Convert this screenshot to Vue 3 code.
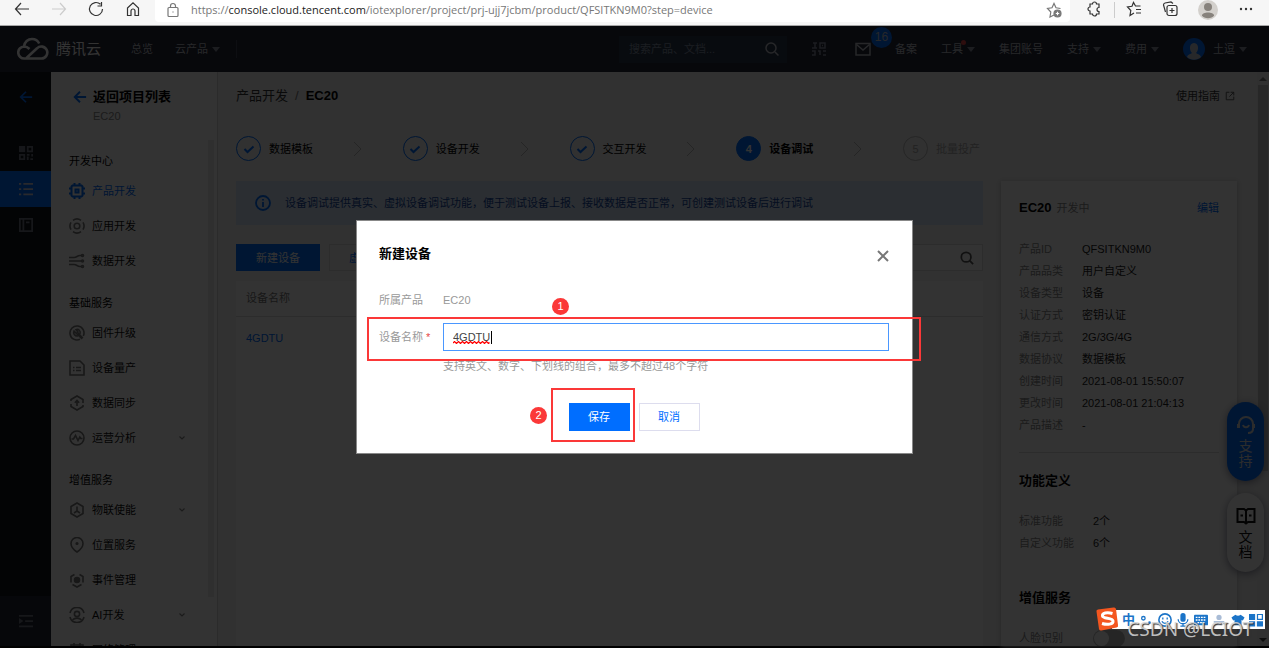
<script setup>
import { ref } from 'vue'

const deviceName = ref('4GDTU')

const groups = [
  {
    title: '开发中心',
    items: [
      { label: '产品开发', icon: 'chip', active: true },
      { label: '应用开发', icon: 'target' },
      { label: '数据开发', icon: 'flow' },
    ],
  },
  {
    title: '基础服务',
    items: [
      { label: '固件升级', icon: 'wrench' },
      { label: '设备量产', icon: 'list' },
      { label: '数据同步', icon: 'sync' },
      { label: '运营分析', icon: 'pulse', more: true },
    ],
  },
  {
    title: '增值服务',
    items: [
      { label: '物联使能', icon: 'hex', more: true },
      { label: '位置服务', icon: 'pin' },
      { label: '事件管理', icon: 'event' },
      { label: 'AI开发', icon: 'ai', more: true },
      { label: '网络管理', icon: 'net' },
    ],
  },
]

const icons = {
  chip: '<path d="M3.500 2.500h9l1 1v9l-1 1h-9l-1-1v-9z"/><path d="M6.500 6.500h3v3h-3z"/><path d="M5.500 0v2.500M10.500 0v2.500M5.500 13.500V16M10.500 13.500V16M0 5.500h2.500M0 10.500h2.500M13.500 5.500H16M13.500 10.500H16"/>',
  target: '<circle cx="8" cy="8" r="2.8"/><path d="M4 2.300a7 7 0 0 1 8 0M14 4.400a7 7 0 0 1 0 7.200M12 13.700a7 7 0 0 1-8 0M2 11.600a7 7 0 0 1 0-7.200"/>',
  flow: '<path d="M0 4.500h5c3 0 3-2 6-2h2M0 8h13M0 11.500h5c3 0 3 2 6 2h2"/><circle cx="13.500" cy="2.500" r="1"/><circle cx="13.500" cy="8" r="1"/><circle cx="13.500" cy="13.500" r="1"/>',
  wrench: '<path d="M14.300 11a7 7 0 1 0-3.300 3.300"/><path stroke-width="2.600" d="M8.500 8.500l5 5"/><path d="M5 6l2.500 2.500 1.500-1.500L7 4.700a3 3 0 0 1 4 3.800L8.500 11A3.500 3.500 0 0 1 5 6z"/>',
  list: '<path d="M1 1h10l4 4v10H1z"/><path d="M4 7.500h1.500M7 7.500h5M4 10.500h1.500M7 10.500h5"/>',
  sync: '<path d="M2 6V4.500L8 1l6 3.500V8M14 10v1.500L8 15l-6-3.500V9M8 11V6M5.800 7.800L8 5.500l2.200 2.300"/>',
  pulse: '<circle cx="8" cy="8" r="7"/><path d="M2.500 9h2L6.500 5.500 9 10.500l1.800-3.500 1 1.500h1.700"/>',
  hex: '<path d="M8 1l6 3.500v7L8 15l-6-3.500v-7z"/><path d="M8 4.500V9l-3 2M8 9l3 2"/>',
  pin: '<path d="M8 15S2 11 2 6.500a6 6 0 0 1 12 0C14 11 8 15 8 15z"/><circle cx="8" cy="6.500" r=".8"/>',
  event: '<path d="M5.500 2.500L2 4.500v6M10.500 2.500l3.500 2v6M3.500 12.500L8 15l4.500-2.500"/><circle cx="8" cy="8" r="2.500" fill="currentColor"/>',
  ai: '<path d="M1 6a7.200 7.200 0 0 1 14 0M1 10a7.200 7.200 0 0 0 14 0"/><circle cx="8" cy="7" r="2.600"/><path d="M3.500 12.800c2.500-2.300 6.500-2.300 9 0"/>',
  net: '<rect x="2" y="3" width="12" height="11"/><path d="M5 1v4M11 1v4M5 9h6"/>',
}

const steps = [
  { label: '数据模板', state: 'done' },
  { label: '设备开发', state: 'done' },
  { label: '交互开发', state: 'done' },
  { label: '设备调试', state: 'current' },
  { label: '批量投产', state: 'todo' },
]

const facts = [
  ['产品ID', 'QFSITKN9M0'],
  ['产品品类', '用户自定义'],
  ['设备类型', '设备'],
  ['认证方式', '密钥认证'],
  ['通信方式', '2G/3G/4G'],
  ['数据协议', '数据模板'],
  ['创建时间', '2021-08-01 15:50:07'],
  ['更改时间', '2021-08-01 21:04:13'],
  ['产品描述', '-'],
]
</script>

<template>
  <div class="window">
    <header class="browser">
      <div class="nav-buttons">
        <button aria-label="后退"><svg viewBox="0 0 16 16"><path d="M15 8H1.500M7 2L1.500 8 7 14" /></svg></button>
        <button aria-label="前进" class="off"><svg viewBox="0 0 16 16"><path d="M1 8h13.500M9 2l5.500 6L9 14" /></svg></button>
        <button aria-label="刷新"><svg viewBox="0 0 16 16"><path d="M14.500 8a6.500 6.500 0 1 1-2-4.700M13.500 1v4h-4" /></svg></button>
        <button aria-label="主页"><svg viewBox="0 0 16 16"><path d="M2.500 7L8 1.800 13.500 7v7.500H10V10a2 2 0 0 0-4 0v4.500H2.500z" /></svg></button>
      </div>
      <div class="address">
        <svg viewBox="0 0 16 16"><rect x="3" y="5.500" width="10" height="9" rx="1" /><path d="M5.500 5.500V4a2.500 2.500 0 0 1 5 0v1.500M8 9.500v1" /></svg>
        <span class="url">https://<b>console.cloud.tencent.com</b>/iotexplorer/project/prj-ujj7jcbm/product/QFSITKN9M0?step=device</span>
        <button aria-label="收藏"><svg viewBox="0 0 16 16"><path d="M8 13l-4 2 .8-5L1.500 6.500l4.500-.7L8 1.500l2 4.300 4.500.7" /><circle cx="11.500" cy="11.500" r="3.500" fill="currentColor" /><path stroke="#fff" d="M11.500 9.800v3.400M9.800 11.500h3.400" /></svg></button>
      </div>
      <div class="browser-tools">
        <button aria-label="扩展"><svg viewBox="0 0 16 16"><path d="M4 3h2.500a2 2 0 0 1 4 0H13v3.500a2 2 0 0 0 0 4V13h-2.500a2 2 0 0 1-4 0H4v-3a2 2 0 0 1 0-4z" /></svg></button>
        <i class="rule"></i>
        <button aria-label="收藏夹"><svg viewBox="0 0 16 16"><path d="M8 12l-4 2.500.8-5L1.500 6l4.500-.7L7.500 1.500 9.500 5h5M10 8.500h5M10 12h5" /></svg></button>
        <button aria-label="集锦"><svg viewBox="0 0 16 16"><rect x="5" y="4.500" width="10" height="10" rx="2" /><path d="M3.500 11L1.500 4a2 2 0 0 1 1.500-2l6-1 2 1.500M10 7v5M7.500 9.500h5" /></svg></button>
        <button aria-label="个人资料" class="person"><svg viewBox="0 0 20 20"><circle cx="10" cy="10" r="10" fill="#d3d0cc" stroke="none" /><circle cx="10" cy="7" r="4" fill="#87827c" stroke="none" /><path d="M4 15.500c0-4 12-4 12 0-2 3.500-10 3.500-12 0z" fill="#87827c" stroke="none" /></svg></button>
        <button aria-label="更多"><svg viewBox="0 0 16 16"><g fill="currentColor" stroke="none"><circle cx="3" cy="8" r="1.200" /><circle cx="8" cy="8" r="1.200" /><circle cx="13" cy="8" r="1.200" /></g></svg></button>
      </div>
    </header>

    <div class="page">
      <header class="topbar">
        <a href="#" class="brand">
          <svg viewBox="0 0 32 24"><path d="M9 21.500H7.500a6 6 0 0 1-.5-12C7.500 5 11 2 15 2c3.500 0 6 2 7.200 4.500M8 21.500h16.500a6 6 0 1 0-4.500-10.200L9.500 21M7 9.500c2.500 0 4 1 5.500 2.500" /></svg>
          <span>腾讯云</span>
        </a>
        <a href="#">总览</a>
        <a href="#" class="drop">云产品</a>
        <i class="rule"></i>
        <div class="top-right">
          <label class="top-search">
            <input type="text" aria-label="搜索" placeholder="搜索产品、文档..." />
            <svg viewBox="0 0 16 16"><circle cx="7" cy="7" r="5" /><path d="M11 11l3.500 3.500" /></svg>
          </label>
          <svg class="glyph" viewBox="0 0 16 16"><path d="M2 2h4M4 2v5M1 7h5M9 2h5v5H9zM1 10h3v4H1M7 10h2v4M12 10h3M12 14h3M11 4.500h1" /></svg>
          <a href="#" class="mail" aria-label="消息">
            <svg viewBox="0 0 16 16"><rect x="1" y="2.500" width="14" height="11.500" /><path d="M1.500 3.500L8 9l6.500-5.500" /></svg>
            <span class="count">16</span>
          </a>
          <a href="#">备案</a>
          <a href="#" class="drop hot">工具</a>
          <a href="#">集团账号</a>
          <a href="#" class="drop">支持</a>
          <a href="#" class="drop">费用</a>
          <a href="#" class="drop account">
            <svg viewBox="0 0 22 22"><circle cx="11" cy="11" r="11" fill="#006eff" /><path d="M4 19c1-3 4-3 5-4-3-3-3-10 2-10s5 7 2 10c1 1 4 1 5 4-4 3.500-10 3.500-14 0z" fill="#c4c8d0" /></svg>土逗</a>
        </div>
      </header>

      <div class="body">
        <nav class="rail" aria-label="主导航">
          <a href="#" class="back" aria-label="返回"><svg viewBox="0 0 16 16"><path d="M15 8H2M8 2L2 8l6 6" /></svg></a>
          <a href="#" aria-label="概览"><svg viewBox="0 0 16 16"><path d="M0 0h7v7H0z" fill="currentColor" stroke="none" /><path d="M10 1h5v5h-5zM1 10h5v5H1zM9 10h3M15 9v3M10 12v4M13 15h3" /></svg></a>
          <a href="#" class="active" aria-label="产品"><svg viewBox="0 0 16 16"><path d="M0 2h2.500M5 2h11M0 8h2.500M5 8h11M0 14h2.500M5 14h11" /></svg></a>
          <a href="#" aria-label="文档"><svg viewBox="0 0 16 16"><path d="M1 1h14v14H1zM5 2v12M8 5h4" /></svg></a>
          <button class="fold" aria-label="收起"><svg viewBox="0 0 16 16"><path d="M0 2h16M7 8h9M0 14h16" /><path fill="currentColor" stroke="none" d="M0 4.500l5 3.500-5 3.500z" /></svg></button>
        </nav>

        <aside class="side">
          <div class="side-head">
            <a href="#"><svg viewBox="0 0 16 16"><path d="M15 8H2M8 2L2 8l6 6" /></svg>返回项目列表</a>
            <small>EC20</small>
          </div>
          <div class="menu">
            <section v-for="g in groups" :key="g.title">
              <h3>{{ g.title }}</h3>
              <a v-for="i in g.items" :key="i.label" href="#" :class="{ active: i.active }">
                <svg viewBox="0 0 16 16" v-html="icons[i.icon]"></svg>
                <span>{{ i.label }}</span>
                <svg v-if="i.more" class="more" viewBox="0 0 8 8"><path d="M1.500 2.500L4 5l2.500-2.500" /></svg>
              </a>
            </section>
            <i class="thumb"></i>
          </div>
        </aside>

        <main>
          <div class="crumbs">
            <a href="#">产品开发</a><span>/</span><strong>EC20</strong>
            <a href="#" class="guide">使用指南<svg viewBox="0 0 16 16"><path d="M7 2H2v12h12V9M9 2h5v5M14 2L7 9" /></svg></a>
          </div>
          <div class="columns">
            <div class="work">
              <ol class="steps">
                <li v-for="(s, n) in steps" :key="s.label" :class="s.state">
                  <i class="dot"><svg v-if="s.state === 'done'" viewBox="0 0 12 12"><path d="M1.500 6l3 3 6-5.500" /></svg><template v-else>{{ n + 1 }}</template></i>
                  <span>{{ s.label }}</span>
                  <svg v-if="n < 4" class="next" viewBox="0 0 10 16"><path d="M1 1l7 7-7 7" /></svg>
                </li>
              </ol>
              <p class="notice">
                <svg viewBox="0 0 16 16"><circle cx="8" cy="8" r="7" /><path d="M8 7v5M8 4v1.500" /></svg>
                设备调试提供真实、虚拟设备调试功能，便于测试设备上报、接收数据是否正常，可创建测试设备后进行调试
              </p>
              <div class="actions">
                <button class="primary">新建设备</button>
                <button class="plain">虚拟</button>
                <label class="find"><input type="text" aria-label="搜索设备" /><svg viewBox="0 0 16 16"><circle cx="7" cy="7" r="5.500" /><path d="M11 11l4 4" /></svg></label>
              </div>
              <table>
                <thead><tr><th>设备名称</th></tr></thead>
                <tbody><tr><td><a href="#">4GDTU</a></td></tr></tbody>
              </table>
            </div>
            <aside class="card">
              <div class="card-head"><strong>EC20</strong><span>开发中</span><a href="#">编辑</a></div>
              <dl>
                <template v-for="f in facts" :key="f[0]"><dt>{{ f[0] }}</dt><dd>{{ f[1] }}</dd></template>
              </dl>
              <hr />
              <h2>功能定义</h2>
              <dl class="wide"><dt>标准功能</dt><dd>2个</dd><dt>自定义功能</dt><dd>6个</dd></dl>
              <h2 class="later">增值服务</h2>
              <label class="toggle"><span>人脸识别</span><input type="checkbox" /></label>
            </aside>
          </div>
        </main>
        <div class="scrollbar"><i class="up"></i><i class="bar"></i><i class="down"></i></div>
      </div>

      <div class="floats">
        <button class="support"><svg viewBox="0 0 20 20"><path d="M3 13V9a7 7 0 0 1 14 0v5c0 3-2 4-5 4M2 9v4M18 9v4M7 10c1 3 5 3 6 0" /></svg>支<br />持</button>
        <button><svg viewBox="0 0 20 20"><path d="M1.500 3H8l2 1.500L12 3h6.500v13H12l-2 1.500L8 16H1.500zM10 4.500v13M4.500 9.500H7M13 9.500h2.500" /></svg>文<br />档</button>
      </div>

      <div class="mask">
        <form class="dialog" role="dialog" aria-labelledby="dialog-title" @submit.prevent>
          <div class="dialog-head">
            <h1 id="dialog-title">新建设备</h1>
            <button type="button" aria-label="关闭"><svg viewBox="0 0 12 12"><path d="M1 1l10 10M11 1L1 11" /></svg></button>
          </div>
          <div class="field"><span class="name">所属产品</span><span class="value">EC20</span></div>
          <div class="field entry">
            <label class="name" for="device">设备名称<em>*</em></label>
            <div class="box">
              <input id="device" v-model="deviceName" type="text" spellcheck="false" />
              <svg class="squiggle" viewBox="0 0 38 3"><path d="M0 2l1.500-1.500 2 2 2-2 2 2 2-2 2 2 2-2 2 2 2-2 2 2 2-2 2 2 2-2 2 2 2-2 2 2 2-2 2 2 1-1" /></svg>
              <i class="caret"></i>
            </div>
          </div>
          <p class="hint">支持英文、数字、下划线的组合，最多不超过48个字符</p>
          <div class="dialog-foot">
            <button class="save" type="submit">保存</button>
            <button class="cancel" type="button">取消</button>
          </div>
          <i class="frame first"></i>
          <i class="frame second"></i>
          <b class="mark one">1</b>
          <b class="mark two">2</b>
        </form>
      </div>
    </div>

    <div class="ime">
      <svg class="sogou" viewBox="0 0 24 24"><path d="M1.500 4.500Q1 3 3 2.500L18.500.5q2-.5 2.500 1.500L23 18q.5 2-1.500 2.500l-15 3q-2 .5-2.500-1.500z" fill="#f4561f" /><path d="M17.500 6.500C12 5 7 6 7.500 9s10 1.500 10.500 5-6 4-11 2.500" fill="none" stroke="#fff" stroke-width="3" /></svg>
      <span>中</span>
      <svg viewBox="0 0 16 16"><circle cx="5" cy="6" r="2" fill="none" stroke="currentColor" stroke-width="1.500" /><circle cx="12" cy="11" r="1.500" /></svg>
      <svg viewBox="0 0 16 16"><circle cx="8" cy="8" r="7" fill="none" stroke="currentColor" stroke-width="1.800" /><path d="M5.500 5v2.500M10.500 5v2.500M4.500 9.500c1.500 3 5.500 3 7 0" fill="none" stroke="currentColor" stroke-width="1.500" /></svg>
      <svg viewBox="0 0 16 16"><rect x="5" y="0" width="6" height="10" rx="3" /><path d="M2.500 7c0 7 11 7 11 0M8 12v3M5 15h6" fill="none" stroke="currentColor" stroke-width="1.500" /></svg>
      <svg viewBox="0 0 16 16"><rect x="0" y="2" width="16" height="12" rx="1" /><path d="M2 5h12M2 8h12M4 11h8" stroke="#fff" stroke-dasharray="2 1" /></svg>
      <svg class="pale" viewBox="0 0 16 16"><circle cx="8" cy="5" r="3" /><path d="M2 9h12v2H2zM4 12h8v2H4z" /></svg>
      <svg viewBox="0 0 16 16"><path d="M5 2q3 2 6 0l4.500 3-2 3.500-1.500-.5v6H4V8l-1.500.5-2-3.500z" /></svg>
      <svg viewBox="0 0 16 16"><path d="M0 1h7v7H0zM0 9.500h7v6H0zM9 9.500h7v6H9z" /><path d="M9.700 1.700h5.600v5.600H9.700z" fill="none" stroke="currentColor" stroke-width="1.400" /></svg>
    </div>
    <div class="watermark">CSDN @LCIOT</div>
  </div>
</template>

<style>
html, body { margin: 0; background: #000; }
</style>

<style scoped>
.window {
  position: relative;
  display: flex;
  flex-direction: column;
  height: 100vh;
  overflow: hidden;
  font: 11px/22px "Liberation Sans", "Noto Sans CJK SC", sans-serif;
  color: #000;
}
* { box-sizing: border-box; }
a { color: inherit; text-decoration: none; }
button, input { font: inherit; color: inherit; margin: 0; }
button { padding: 0; border: 0; background: none; }
i, em { font-style: normal; }
h1, h2, h3, p, dl, dd, ol { margin: 0; padding: 0; }
svg { display: block; flex: none; width: 16px; height: 16px; fill: none; stroke: currentColor; stroke-width: 1.5; }

.browser { flex: none; display: flex; height: 26px; background: #f6f6f6; border-bottom: 1px solid #a6a6a6; color: #333; }
.browser svg { stroke-width: 1.2; }
.browser button { display: grid; place-items: center; height: 18px; }
.nav-buttons { display: flex; width: 155px; padding: 0 14px; gap: 21px; }
.nav-buttons .off { color: #ccc; }
.address { flex: 1; display: flex; align-items: center; gap: 10px; height: 22px; padding: 0 8px 2px 10px; background: #fff; border-radius: 0 0 4px 4px; color: #777; }
.url { flex: 1; font: 11px/18px "Open Sans", "Noto Sans", sans-serif; white-space: nowrap; }
.url b { font-weight: 400; color: #222; }
.browser-tools { display: flex; gap: 20px; padding: 0 15px 0 16px; }
.browser-tools .rule { width: 1px; height: 16px; margin: 2px -9px 0 -8px; background: #ccc; }
.person svg { width: 20px; height: 20px; }

.page { position: relative; flex: 1; min-height: 0; display: flex; flex-direction: column; margin-bottom: 2px; background: #f3f3f3; }
.topbar { flex: none; display: flex; align-items: center; height: 46px; padding: 0 22px 0 17px; background: #23283a; color: #c0c3cc; }
.brand { display: flex; align-items: center; gap: 7px; margin-right: 30px; font-size: 15px; color: #fff; }
.brand svg { width: 32px; height: 24px; stroke-width: 2.6; }
.topbar > .drop { margin: 0 16px 0 22px; }
.drop { display: flex; align-items: center; }
.drop::after { content: ""; margin-left: 4px; border: 4px solid transparent; border-top: 5px solid #8b90a0; border-bottom: 0; }
.topbar > .rule { width: 1px; height: 18px; background: #40465a; }
.top-right { display: flex; align-items: center; gap: 24px; margin-left: auto; }
.top-search { display: flex; align-items: center; width: 168px; height: 27px; padding: 0 7px 0 10px; background: #2c3a4e; }
.top-search input { flex: 1; min-width: 0; padding: 0; border: 0; background: none; }
.top-search input::placeholder { color: #8390a5; }
.glyph { color: #8b90a0; }
.mail { position: relative; margin-left: 4px; }
.count { position: absolute; left: 16px; top: -14px; width: 21px; height: 21px; border-radius: 50%; background: #006eff; font-size: 12px; line-height: 21px; text-align: center; }
.hot { position: relative; }
.hot::before { content: ""; position: absolute; left: 20px; top: 2px; width: 5px; height: 5px; border-radius: 50%; background: #e54545; }
.account svg { width: 22px; height: 22px; margin-right: 8px; stroke: none; }

.body { flex: 1; min-height: 0; display: flex; }
.rail { flex: none; display: flex; flex-direction: column; width: 51px; background: #12161c; color: #6f7480; }
.rail a, .fold { display: grid; place-items: center; height: 36px; }
.rail svg { width: 14px; height: 14px; stroke-width: 2; }
.rail .back { height: 50px; margin-bottom: 13px; color: #006eff; }
.rail .active { background: #006eff; color: #ccd; }
.rail .fold { height: 50px; margin-top: auto; background: #1e2433; }

.side { flex: none; display: flex; flex-direction: column; width: 167px; background: #fff; border-right: 1px solid #d5d5d5; }
.side-head { flex: none; height: 68px; padding: 16px 0 0 22px; }
.side-head a { display: flex; align-items: center; gap: 6px; font-size: 13px; line-height: 18px; font-weight: 700; }
.side-head svg { width: 14px; height: 14px; color: #006eff; stroke-width: 2.2; }
.side-head small { display: block; padding-left: 20px; font-size: 11px; line-height: 20px; color: #888; }
.menu { position: relative; flex: 1; min-height: 0; overflow: hidden; padding-top: 8px; }
.menu section { margin-bottom: 12px; }
.menu h3 { padding: 2px 0 0 18px; font-size: 11px; line-height: 23px; font-weight: 400; }
.menu section a { display: flex; align-items: center; gap: 7px; height: 35px; padding: 0 31px 0 18px; color: #111; }
.menu svg { color: #777; stroke-width: 1.6; }
.menu section a.active, .menu .active svg { color: #006eff; }
.menu .active svg { stroke-width: 2; }
.menu .more { width: 8px; height: 8px; margin-left: auto; color: #888; stroke-width: 1.2; }
.thumb { position: absolute; right: 3px; top: 0; bottom: 49px; width: 6px; background: #ececec; }

main { flex: 1; min-width: 0; padding: 0 20px 0 18px; display: flex; flex-direction: column; }
.crumbs { display: flex; align-items: center; height: 48px; padding-right: 2px; font-size: 13px; color: #333; }
.crumbs span { margin: 0 7px; color: #777; }
.crumbs strong { color: #000; }
.guide { display: flex; align-items: center; gap: 5px; margin-left: auto; font-size: 11px; }
.guide svg { width: 10px; height: 10px; color: #555; }
.columns { flex: 1; min-height: 0; display: flex; gap: 18px; }
.work { flex: 1; min-width: 0; display: flex; flex-direction: column; }
.steps { display: flex; padding: 16px 3px 20px 0; list-style: none; }
.steps li { display: flex; align-items: center; flex: 1; height: 25px; }
.steps li:last-child { flex: none; }
.dot { display: grid; place-items: center; width: 25px; height: 25px; margin-right: 8px; border: 1px solid #006eff; border-radius: 50%; color: #006eff; }
.dot svg { width: 12px; height: 12px; stroke-width: 2; }
.next { width: 10px; margin: 0 auto; color: #bbb; stroke-width: 1; }
.current .dot { background: #006eff; color: #fff; font-weight: 700; }
.current span { font-weight: 700; }
.todo { color: #aaa; }
.todo .dot { border-color: #bbb; color: #aaa; }
.notice { display: flex; align-items: center; gap: 14px; height: 44px; padding: 0 19px; background: #d5e5fb; color: #1648a0; white-space: nowrap; }
.notice svg { color: #006eff; stroke-width: 1.8; }
.actions { display: flex; gap: 9px; margin-top: 19px; height: 27px; }
.primary { width: 84px; background: #006eff; color: #fff; }
.plain { padding: 0 19px; border: 1px solid #ddd; color: #006eff; }
.find { display: flex; align-items: center; flex: 1; padding-right: 8px; border: 1px solid #ddd; background: #fff; }
.find input { flex: 1; min-width: 0; border: 0; background: none; }
.find svg { width: 14px; height: 14px; color: #555; stroke-width: 2; }
table { width: 100%; margin-top: 10px; border-collapse: collapse; background: #fff; }
th, td { padding: 0 10px; text-align: left; }
th { height: 35px; font-weight: 400; color: #777; border-bottom: 1px solid #ddd; }
td { height: 44px; color: #006eff; }
.work::after { content: ""; flex: 1; background: #fff; }

.card { flex: none; width: 236px; margin-top: 61px; padding: 16px 18px 0; overflow: hidden; background: #fff; box-shadow: 0 1px 5px #bbb; }
.card { position: relative; }
.card-head { display: flex; align-items: center; margin-bottom: 19px; color: #888; }
.card-head strong { margin-right: 5px; font-size: 13px; color: #000; }
.card-head a { margin-left: auto; color: #006eff; }
dl { display: grid; grid-template-columns: 63px 1fr; }
dl.wide { grid-template-columns: 74px 1fr; }
dt, .toggle { color: #888; }
dd { color: #222; }
hr { margin: 16px 0 17px; border: 0; border-top: 1px solid #ddd; }
h2 { margin-bottom: 18px; font-size: 13px; line-height: 22px; }
.later { margin-top: 33px; }
.toggle { display: flex; align-items: center; }
.toggle span { width: 74px; }
.toggle input { appearance: none; width: 32px; height: 17px; border-radius: 9px; background: #bbb; }
.toggle input::before { content: ""; display: block; width: 15px; height: 15px; margin: 1px; border-radius: 50%; background: #fff; }

.scrollbar { flex: none; display: flex; flex-direction: column; align-items: center; width: 12px; padding: 5px 0 4px; background: #f1f1f1; }
.scrollbar .up { border: 4px solid transparent; border-bottom-color: #777; border-top: 0; }
.scrollbar .bar { width: 10px; height: 386px; margin-top: 4px; background: #c1c1c1; }
.scrollbar .down { margin-top: auto; border: 4px solid transparent; border-top-color: #444; border-bottom: 0; }

.floats { position: absolute; right: 5px; top: 376px; display: flex; flex-direction: column; gap: 12px; }
.floats button { width: 37px; height: 79px; border-radius: 19px; background: #fff; box-shadow: 0 2px 8px #889; color: #111; font-size: 14px; line-height: 15px; text-align: center; }
.floats .support { background: #006eff; color: #ddd; }
.floats svg { width: 20px; height: 20px; margin: 0 auto 4px; stroke-width: 2; }

.mask { position: absolute; inset: 0; bottom: -2px; display: grid; place-items: center; background: rgba(0, 0, 0, .8); }
.dialog { position: relative; width: 557px; padding: 22px 23px 22px 22px; border: 1px solid #888; background: #fff; }
.dialog-head { display: flex; align-items: center; justify-content: space-between; height: 22px; margin-bottom: 24px; }
h1 { font-size: 13px; }
.dialog-head button { padding-top: 3px; }
.dialog-head svg { width: 12px; height: 12px; color: #777; stroke-width: 2; }
.field { display: flex; align-items: center; color: #999; }
.name { width: 64px; }
.name em { margin-left: 3px; color: #e54545; }
.entry { margin-top: 12px; }
.box { position: relative; flex: 1; }
.box input { display: block; width: 100%; height: 28px; padding: 0 9px; border: 1px solid #4a97ff; background: #fff; color: #444; outline: 0; }
.squiggle { position: absolute; left: 10px; top: 18px; width: 38px; height: 3px; stroke: #f00; stroke-width: 1.2; }
.caret { position: absolute; left: 48px; top: 8px; width: 1px; height: 13px; background: #000; }
.hint { margin: 4px 0 26px 64px; color: #999; }
.dialog-foot { display: flex; justify-content: center; gap: 9px; }
.dialog-foot button { width: 61px; height: 28px; }
.save { background: #006eff; color: #fff; }
.cancel { border: 1px solid #dde; color: #006eff; }
.frame { position: absolute; border: 2px solid #fb3838; pointer-events: none; }
.first { left: 10px; right: -9px; top: 96px; height: 44px; }
.second { left: 194px; top: 167px; width: 84px; height: 54px; }
.mark { position: absolute; width: 17px; height: 17px; border-radius: 50%; background: #fb3838; color: #fff; font-weight: 400; line-height: 17px; text-align: center; }
.one { left: 195px; top: 77px; }
.two { left: 173px; top: 186px; }

.ime { position: absolute; right: 4px; bottom: 19px; display: flex; align-items: center; justify-content: space-between; width: 153px; height: 19px; padding: 0 2px 0 10px; background: #fff; color: #1b74c8; }
.ime svg { width: 14px; height: 14px; fill: currentColor; stroke: none; }
.ime span { font-size: 13px; line-height: 19px; font-weight: 700; }
.ime .sogou { position: absolute; left: -17px; top: -3px; width: 24px; height: 24px; }
.ime .pale { color: #a9bcd6; }
.watermark { position: absolute; right: 16px; bottom: 7px; color: rgba(215, 215, 215, .85); font: 19px/24px "Noto Sans", sans-serif; text-shadow: 1px 1px 1px #333; }
</style>
